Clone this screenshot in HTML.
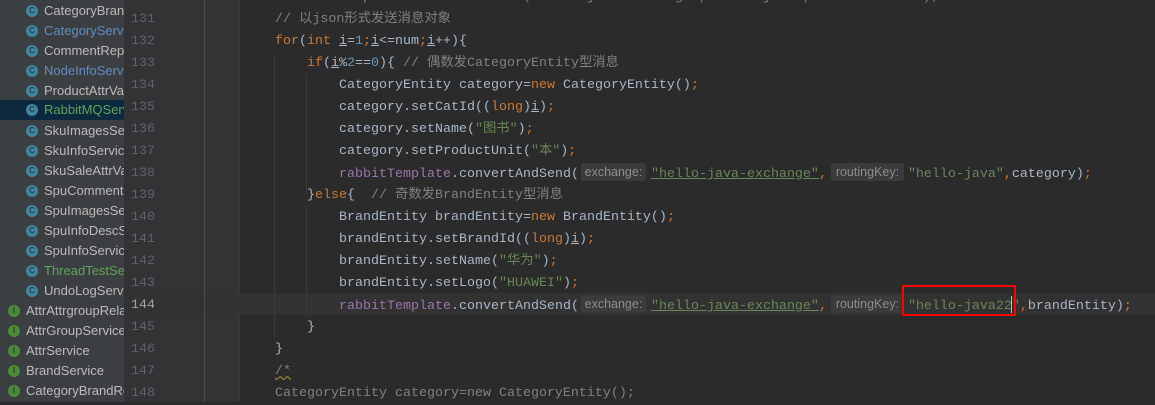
<!DOCTYPE html>
<html><head><meta charset="utf-8"><style>
*{margin:0;padding:0;box-sizing:border-box}
body{width:1155px;height:402px;overflow:hidden;background:#2b2b2b;position:relative;font-family:"Liberation Sans","Noto Sans CJK SC",sans-serif}
#side{position:absolute;left:0;top:0;width:124px;height:402px;background:#3c3f41;overflow:hidden}
.r{position:absolute;height:20px;left:0;width:124px;font-size:13px;line-height:20px;color:#bbbbbb;white-space:nowrap}
.r.sel{background:#0d293e}
.ic{position:absolute;top:4px;width:12px;height:12px;border-radius:50%;background:#3e86a0;color:#2b3d45;font-size:8px;line-height:12px;text-align:center;font-weight:bold}
.ic.i{background:#4a8a3a;color:#2b3b22}
.r span.t{position:absolute;top:0}
#gut{position:absolute;left:124px;top:0;width:116px;height:402px;background:#313335;border-right:1px solid #3a3a3a}
.ln{position:absolute;left:131px;font-family:"Liberation Mono",monospace;font-size:13.33px;color:#606366;line-height:22px}
.l{position:absolute;left:275px;font-family:"Liberation Mono","Noto Sans CJK SC",monospace;font-size:13.33px;line-height:22px;color:#a9b7c6;white-space:pre}
.k{color:#cc7832}.s{color:#6a8759}.c{color:#808080}.f{color:#9876aa}.n{color:#6897bb}.u{text-decoration:underline}
.su{text-decoration:underline;color:#6a8759}
.h{display:inline-block;background:#3b3b3b;color:#8c8c8c;font-family:"Liberation Sans",sans-serif;font-size:12.5px;line-height:18px;height:18px;border-radius:3px;text-align:center;vertical-align:1px}
.g{position:absolute;width:1px;background:#393939}
#w{position:absolute;left:0;top:1px;width:1155px;height:402px}
</style></head><body>
<div id="side">
<div class="r" style="top:1px"><div class="ic" style="left:26px">C</div><span class="t" style="left:44px">CategoryBrandR</span></div>
<div class="r" style="top:21px;color:#5f8dbe"><div class="ic" style="left:26px">C</div><span class="t" style="left:44px">CategoryService</span></div>
<div class="r" style="top:41px"><div class="ic" style="left:26px">C</div><span class="t" style="left:44px">CommentReply</span></div>
<div class="r" style="top:61px;color:#5f8dbe"><div class="ic" style="left:26px">C</div><span class="t" style="left:44px">NodeInfoService</span></div>
<div class="r" style="top:81px"><div class="ic" style="left:26px">C</div><span class="t" style="left:44px">ProductAttrValue</span></div>
<div class="r sel" style="top:100px;color:#62a35c"><div class="ic" style="left:26px">C</div><span class="t" style="left:44px">RabbitMQService</span></div>
<div class="r" style="top:121px"><div class="ic" style="left:26px">C</div><span class="t" style="left:44px">SkuImagesService</span></div>
<div class="r" style="top:141px"><div class="ic" style="left:26px">C</div><span class="t" style="left:44px">SkuInfoService</span></div>
<div class="r" style="top:161px"><div class="ic" style="left:26px">C</div><span class="t" style="left:44px">SkuSaleAttrValue</span></div>
<div class="r" style="top:181px"><div class="ic" style="left:26px">C</div><span class="t" style="left:44px">SpuCommentService</span></div>
<div class="r" style="top:201px"><div class="ic" style="left:26px">C</div><span class="t" style="left:44px">SpuImagesService</span></div>
<div class="r" style="top:221px"><div class="ic" style="left:26px">C</div><span class="t" style="left:44px">SpuInfoDescService</span></div>
<div class="r" style="top:241px"><div class="ic" style="left:26px">C</div><span class="t" style="left:44px">SpuInfoService</span></div>
<div class="r" style="top:261px;color:#62a35c"><div class="ic" style="left:26px">C</div><span class="t" style="left:44px">ThreadTestService</span></div>
<div class="r" style="top:281px"><div class="ic" style="left:26px">C</div><span class="t" style="left:44px">UndoLogService</span></div>
<div class="r" style="top:301px"><div class="ic i" style="left:8px">I</div><span class="t" style="left:26px">AttrAttrgroupRelation</span></div>
<div class="r" style="top:321px"><div class="ic i" style="left:8px">I</div><span class="t" style="left:26px">AttrGroupService</span></div>
<div class="r" style="top:341px"><div class="ic i" style="left:8px">I</div><span class="t" style="left:26px">AttrService</span></div>
<div class="r" style="top:361px"><div class="ic i" style="left:8px">I</div><span class="t" style="left:26px">BrandService</span></div>
<div class="r" style="top:381px"><div class="ic i" style="left:8px">I</div><span class="t" style="left:26px">CategoryBrandRelation</span></div>
</div>
<div id="gut"></div>
<div style="position:absolute;left:124px;top:293px;width:1031px;height:22px;background:#323232"></div>
<div style="position:absolute;left:204px;top:0;width:1px;height:402px;background:#4a4a4a"></div>
<div id="w">
<div class="g" style="left:274px;top:52px;height:285px"></div>
<div class="g" style="left:306px;top:74px;height:120px"></div>
<div class="g" style="left:306px;top:206px;height:110px"></div>
<div class="ln" style="top:8px">131</div><div class="ln" style="top:30px">132</div><div class="ln" style="top:52px">133</div><div class="ln" style="top:74px">134</div><div class="ln" style="top:96px">135</div><div class="ln" style="top:118px">136</div><div class="ln" style="top:140px">137</div><div class="ln" style="top:162px">138</div><div class="ln" style="top:184px">139</div><div class="ln" style="top:206px">140</div><div class="ln" style="top:228px">141</div><div class="ln" style="top:250px">142</div><div class="ln" style="top:272px">143</div><div class="ln" style="top:294px;color:#a4a3a3">144</div><div class="ln" style="top:316px">145</div><div class="ln" style="top:338px">146</div><div class="ln" style="top:360px">147</div><div class="ln" style="top:382px">148</div>
<div class="l c" style="top:-14px">//rabbitTemplate.convertAndSend("hello-java-exchange","hello-java","Hello World!");</div>
<div class="l c" style="top:8px">// 以json形式发送消息对象</div>
<div class="l" style="top:30px"><span class="k">for</span>(<span class="k">int </span><span class="u">i</span>=<span class="n">1</span><span class="k">;</span><span class="u">i</span>&lt;=num<span class="k">;</span><span class="u">i</span>++){</div>
<div class="l" style="top:52px">    <span class="k">if</span>(<span class="u">i</span>%<span class="n">2</span>==<span class="n">0</span>){ <span class="c">// 偶数发CategoryEntity型消息</span></div>
<div class="l" style="top:74px">        CategoryEntity category=<span class="k">new </span>CategoryEntity()<span class="k">;</span></div>
<div class="l" style="top:96px">        category.setCatId((<span class="k">long</span>)<span class="u">i</span>)<span class="k">;</span></div>
<div class="l" style="top:118px">        category.setName(<span class="s">"图书"</span>)<span class="k">;</span></div>
<div class="l" style="top:140px">        category.setProductUnit(<span class="s">"本"</span>)<span class="k">;</span></div>
<div class="l" style="top:162px">        <span class="f">rabbitTemplate</span>.convertAndSend(<span class="h" style="width:65px;margin:0 5px 0 2px">exchange:</span><span class="su">"hello-java-exchange"</span><span class="k">,</span><span class="h" style="width:73px;margin:0 4px 0 4px">routingKey:</span><span class="s">"hello-java"</span><span class="k">,</span>category)<span class="k">;</span></div>
<div class="l" style="top:184px">    }<span class="k">else</span>{  <span class="c">// 奇数发BrandEntity型消息</span></div>
<div class="l" style="top:206px">        BrandEntity brandEntity=<span class="k">new </span>BrandEntity()<span class="k">;</span></div>
<div class="l" style="top:228px">        brandEntity.setBrandId((<span class="k">long</span>)<span class="u">i</span>)<span class="k">;</span></div>
<div class="l" style="top:250px">        brandEntity.setName(<span class="s">"华为"</span>)<span class="k">;</span></div>
<div class="l" style="top:272px">        brandEntity.setLogo(<span class="s">"HUAWEI"</span>)<span class="k">;</span></div>
<div class="l" style="top:294px">        <span class="f">rabbitTemplate</span>.convertAndSend(<span class="h" style="width:65px;margin:0 5px 0 2px">exchange:</span><span class="su">"hello-java-exchange"</span><span class="k">,</span><span class="h" style="width:73px;margin:0 4px 0 4px">routingKey:</span><span class="s">"hello-java22"</span><span class="k">,</span>brandEntity)<span class="k">;</span></div>
<div class="l" style="top:316px">    }</div>
<div class="l" style="top:338px">}</div>
<div class="l c" style="top:360px"><span style="text-decoration:underline wavy #8a7a3a">/*</span></div>
<div class="l c" style="top:382px">CategoryEntity category=new CategoryEntity();</div>
</div>
<div style="position:absolute;left:1011px;top:296px;width:1px;height:17px;background:#bbbbbb"></div>
<div style="position:absolute;left:902px;top:285px;width:114px;height:31px;border:2px solid #ff0000"></div>
</body></html>
